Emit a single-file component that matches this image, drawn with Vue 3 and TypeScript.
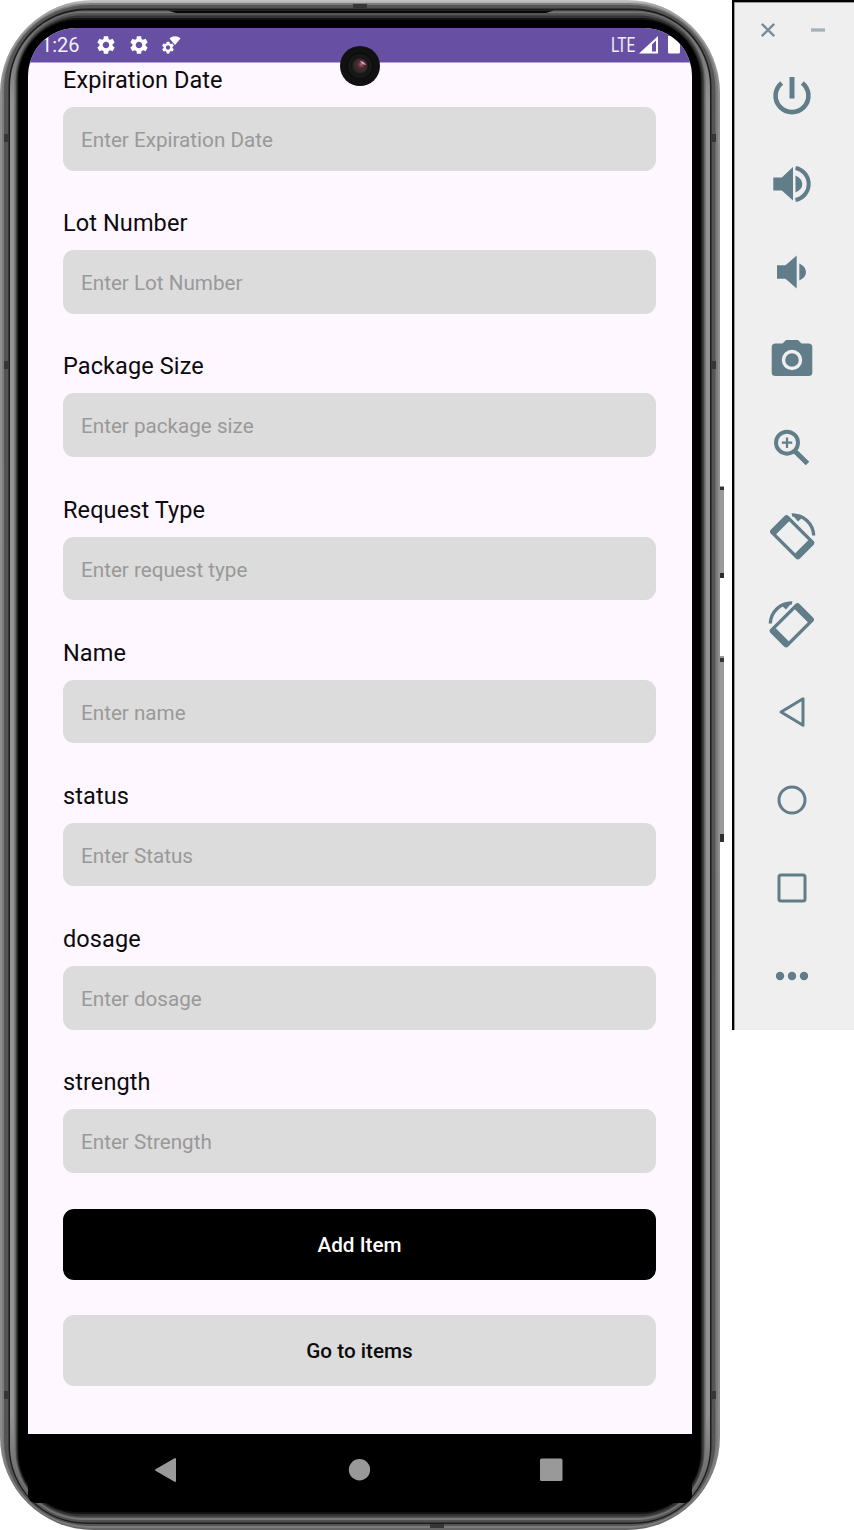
<script setup lang="ts">
interface Field {
  label: string
  hint: string
}

const fields: Field[] = [
  { label: 'Expiration Date', hint: 'Enter Expiration Date' },
  { label: 'Lot Number', hint: 'Enter Lot Number' },
  { label: 'Package Size', hint: 'Enter package size' },
  { label: 'Request Type', hint: 'Enter request type' },
  { label: 'Name', hint: 'Enter name' },
  { label: 'status', hint: 'Enter Status' },
  { label: 'dosage', hint: 'Enter dosage' },
  { label: 'strength', hint: 'Enter Strength' },
]

const gear =
  'M19.14 12.94c.04-.3.06-.61.06-.94 0-.32-.02-.64-.07-.94l2.03-1.58c.18-.14.23-.41.12-.61l-1.92-3.32c-.12-.22-.37-.29-.59-.22l-2.39.96c-.5-.38-1.03-.7-1.62-.94l-.36-2.54c-.04-.24-.24-.41-.48-.41h-3.84c-.24 0-.43.17-.47.41l-.36 2.54c-.59.24-1.13.57-1.62.94l-2.39-.96c-.22-.08-.47 0-.59.22L2.74 8.87c-.12.21-.08.47.12.61l2.03 1.58c-.05.3-.09.63-.09.94s.02.64.07.94l-2.03 1.58c-.18.14-.23.41-.12.61l1.92 3.32c.12.22.37.29.59.22l2.39-.96c.5.38 1.03.7 1.62.94l.36 2.54c.05.24.24.41.48.41h3.84c.24 0 .44-.17.47-.41l.36-2.54c.59-.24 1.13-.56 1.62-.94l2.39.96c.22.08.47 0 .59-.22l1.92-3.32c.12-.22.07-.47-.12-.61l-2.01-1.58zM12 15.6c-1.98 0-3.6-1.62-3.6-3.6s1.62-3.6 3.6-3.6 3.6 1.62 3.6 3.6-1.62 3.6-3.6 3.6z'
</script>

<template>
  <div class="stage">
    <div class="phone">
      <svg class="frame" width="726" height="1530" viewBox="0 0 726 1530">
        <defs>
          <linearGradient id="rim" x1="0" y1="0" x2="0" y2="1">
            <stop offset="0" stop-color="#c6c6c6" />
            <stop offset="0.003" stop-color="#a4a4a4" />
            <stop offset="0.06" stop-color="#929292" />
            <stop offset="0.94" stop-color="#8c8c8c" />
            <stop offset="1" stop-color="#666" />
          </linearGradient>
          <linearGradient id="lip" x1="0" y1="0" x2="0" y2="1">
            <stop offset="0" stop-color="#686868" />
            <stop offset="0.06" stop-color="#929292" />
            <stop offset="0.93" stop-color="#929292" />
            <stop offset="1" stop-color="#505050" />
          </linearGradient>
          <radialGradient id="lens" cx="0.58" cy="0.4" r="0.6">
            <stop offset="0" stop-color="#a05f80" />
            <stop offset="0.4" stop-color="#4b2838" />
            <stop offset="0.75" stop-color="#3a2a20" />
            <stop offset="1" stop-color="#242424" />
          </radialGradient>
        </defs>
        <rect x="719" y="486" width="5" height="92" fill="#9a9a9a" />
        <rect x="719" y="487" width="5" height="3" fill="#333" />
        <rect x="719" y="573" width="5" height="5" fill="#2b2b2b" />
        <rect x="719" y="656" width="5" height="186" fill="#9a9a9a" />
        <rect x="719" y="658" width="5" height="4" fill="#333" />
        <rect x="719" y="834" width="5" height="8" fill="#2f2f2f" />
        <rect x="0" y="0" width="720" height="1530" rx="93" fill="url(#rim)" />
        <rect x="2" y="3" width="716" height="1525" rx="89" fill="#7c7c7c" />
        <rect x="4" y="5" width="711.5" height="1521" rx="85" fill="#555" />
        <rect x="8.5" y="8.5" width="703" height="1515.500" rx="78" fill="#1d1d1d" />
        <rect x="10" y="10.500" width="700" height="1512" rx="76" fill="url(#lip)" />
        <rect x="14" y="12" width="692" height="1508" rx="70" fill="#777" />
        <rect x="15.500" y="13" width="689" height="1505" rx="67" fill="#555" />
        <rect x="16.500" y="15.500" width="687" height="1501" rx="65" fill="#333" />
        <rect x="17.500" y="18" width="684" height="1496" rx="62" fill="#111" />
        <rect x="18.500" y="20" width="682" height="1492" rx="60" fill="#000" />
        <path d="M168 10.500h386l-8 2.500H176z" fill="#080808" />
        <g fill="#363636">
          <rect x="4" y="134" width="5" height="8" />
          <rect x="4" y="361" width="5" height="8" />
          <rect x="4" y="1391" width="5" height="8" />
          <rect x="711" y="134" width="5" height="8" />
          <rect x="711" y="361" width="5" height="8" />
          <rect x="711" y="1391" width="5" height="8" />
          <rect x="353" y="4" width="14" height="5" />
          <rect x="430" y="1524" width="14" height="4" />
        </g>
      </svg>

      <div class="screen">
        <header class="status">
          <span class="clock">1:26</span>
          <svg class="gear" width="22" height="22" viewBox="0 0 24 24"><path :d="gear" /></svg>
          <svg class="gear" width="22" height="22" viewBox="0 0 24 24"><path :d="gear" /></svg>
          <svg class="link" width="22" height="22" viewBox="0 0 22 22">
            <path transform="translate(0.7 6.200) scale(0.61)" :d="gear" />
            <path d="M9.500 4.500C12.500 1.500 17.500 1.500 20.500 4.500L15 11z" />
          </svg>
          <span class="lte">LTE</span>
          <svg class="signal" width="20" height="18" viewBox="0 0 20 18">
            <path fill-rule="evenodd" d="M0 17.500L19 0V17.500zM13 8.500V15.500H17V4.500z" />
          </svg>
          <svg class="battery" width="13" height="18" viewBox="0 0 13 18">
            <path d="M0 0H12V16q0 1.500-1.500 1.500h-9Q0 17.500 0 16z" />
          </svg>
        </header>

        <main class="form">
          <div v-for="field in fields" :key="field.label" class="field">
            <label class="label">{{ field.label }}</label>
            <div class="input">{{ field.hint }}</div>
          </div>
          <button class="btn primary">Add Item</button>
          <button class="btn plain">Go to items</button>
        </main>
      </div>

      <nav class="nav">
        <svg width="22" height="26" viewBox="0 0 22 26"><path d="M1 13L20 2V24Z" stroke-width="2" /></svg>
        <svg width="24" height="26" viewBox="0 0 24 26"><circle cx="13.500" cy="12.700" r="10.700" stroke="none" /></svg>
        <svg width="23" height="26" viewBox="0 0 23 26"><rect x="0" y="1.500" width="22.500" height="22.500" rx="1.500" stroke="none" /></svg>
      </nav>

      <svg class="camera" width="40" height="40" viewBox="0 0 40 40">
        <circle cx="20" cy="20" r="20" fill="#111" />
        <circle cx="20" cy="20" r="13" fill="#171717" stroke="#080808" />
        <circle cx="20" cy="20" r="7.500" fill="url(#lens)" />
        <path d="M20 15q4 0 6 4l-4-1z" fill="#d59ab9" />
      </svg>
    </div>

    <aside class="tools">
      <div class="window">
        <svg width="16" height="16" viewBox="0 0 16 16"><path d="M1.800 1.800L14.200 14.200M14.200 1.800L1.800 14.200" stroke="#78909c" stroke-width="2.500" /></svg>
        <svg width="16" height="16" viewBox="0 0 16 16"><path d="M1 8H15" stroke="#a2b3bb" stroke-width="3.300" /></svg>
      </div>
      <!-- Power -->
      <div class="tool">
        <svg viewBox="0 0 48 48">
          <path class="line" stroke-width="4.600" d="M13.700 11A16.400 16.400 0 1 0 34.300 11" />
          <path class="line" stroke-width="5" d="M24 5V26.500" />
        </svg>
      </div>
      <!-- Volume up -->
      <div class="tool">
        <svg viewBox="0 0 48 48">
          <path d="M5.300 17.500H13.800L25 7V40.500L13.800 30.500H5.300zM27.500 15.500Q34.300 18.500 34.300 24T27.500 32.500z" />
          <path class="line" stroke-width="4" d="M27.500 8A16.300 16.300 0 0 1 27.500 40" />
        </svg>
      </div>
      <!-- Volume down -->
      <div class="tool">
        <svg viewBox="0 0 48 48">
          <path d="M9 17.300H17.500L28.700 7.500V40.500L17.500 30.700H9zM31.300 15.500Q38 18.500 38 24T31.300 32.500z" />
        </svg>
      </div>
      <!-- Screenshot -->
      <div class="tool">
        <svg viewBox="0 0 48 48">
          <path d="M7.500 7.500H14.500L18 4H30L33.500 7.500H40.500Q44.300 7.500 44.300 11V36.500Q44.300 40 40.500 40H7.500Q3.700 40 3.700 36.500V11Q3.700 7.500 7.500 7.500z" />
          <circle cx="24" cy="24" r="8.500" fill="none" stroke="#efefef" stroke-width="3.400" />
        </svg>
      </div>
      <!-- Zoom -->
      <div class="tool">
        <svg viewBox="0 0 48 48">
          <circle class="line" cx="19" cy="18.700" r="11" stroke-width="3.900" />
          <path class="line" stroke-width="2.200" d="M19 13.500V24M13.800 18.700H24.200" />
          <path class="line" stroke-width="5" d="M27 27.200L39.500 39.500" />
        </svg>
      </div>
      <!-- Rotate left / right -->
      <div v-for="side in ['left', 'right']" :key="side" class="tool">
        <svg viewBox="0 0 48 48" :class="{ mirrored: side === 'right' }">
          <path
            fill-rule="evenodd"
            transform="translate(24.200 25.200) rotate(45)"
            d="M-17.500-12.500H17.500Q20.500-12.500 20.500-9.500V9.500Q20.500 12.500 17.500 12.500H-17.500Q-20.500 12.500-20.500 9.500V-9.500Q-20.500-12.500-17.500-12.500zM-13.500-9.200V9.200H13.500V-9.200z"
          />
          <path class="line" stroke-width="3.300" d="M24 2.800A21.500 21.500 0 0 1 45.700 23.500" />
          <path d="M23 1.500L35 5L30 9.500z" />
        </svg>
      </div>
      <!-- Back -->
      <div class="tool">
        <svg viewBox="0 0 48 48"><path class="line" stroke-width="3" stroke-linejoin="round" d="M13 24L35 10.800V37.200Z" /></svg>
      </div>
      <!-- Home -->
      <div class="tool">
        <svg viewBox="0 0 48 48"><circle class="line" cx="24" cy="24" r="13" stroke-width="3" /></svg>
      </div>
      <!-- Overview -->
      <div class="tool">
        <svg viewBox="0 0 48 48"><rect class="line" x="11" y="11" width="26" height="26" rx="2" stroke-width="3" /></svg>
      </div>
      <!-- More -->
      <div class="tool">
        <svg viewBox="0 0 48 48">
          <circle cx="12" cy="24" r="4.200" />
          <circle cx="24" cy="24" r="4.200" />
          <circle cx="36" cy="24" r="4.200" />
        </svg>
      </div>
    </aside>
  </div>
</template>

<style>
body {
  background: #fff;
}
</style>

<style scoped>
.stage {
  display: flex;
  align-items: flex-start;
  justify-content: space-between;
  width: 854px;
  height: 1530px;
  overflow: hidden;
  font-family: Roboto, "Liberation Sans", sans-serif;
}

.stage * {
  box-sizing: border-box;
}

.stage svg {
  display: block;
  flex: none;
}

.phone {
  position: relative;
  width: 720px;
  height: 1530px;
  padding: 28px 28px 0;
}

.frame {
  position: absolute;
  top: 0;
  left: 0;
}

.screen {
  position: relative;
  height: 1406px;
  overflow: hidden;
  border-radius: 48px 48px 0 0;
  background: #fef7ff;
}

.status {
  display: flex;
  align-items: center;
  height: 35px;
  padding-left: 13px;
  border-bottom: 1px solid #b3a3d6;
  background: #6750a3;
  color: #f4effb;
  font-size: 20px;
}

.status svg {
  fill: #fff;
}

.clock {
  width: 39px;
  line-height: 36px;
}

.gear {
  margin: 0 10.500px 0 15px;
}

.gear + .gear {
  margin-left: 0;
}

.lte {
  width: 28px;
  margin-left: auto;
  transform: scaleX(0.77);
  transform-origin: left;
}

.signal {
  margin-right: 9px;
}

.battery {
  margin-right: 11px;
}

.form {
  display: flex;
  flex-direction: column;
  padding: 0 36px 0 35px;
}

.field {
  margin-bottom: 35.700px;
}

.label {
  display: block;
  height: 44px;
  color: #0c0a0d;
  font-size: 23.500px;
  line-height: 34.600px;
  letter-spacing: 0.100px;
}

.input {
  height: 63.500px;
  padding-left: 18px;
  border-radius: 11px;
  background: #dcdcdc;
  color: #999;
  font-size: 20.650px;
  line-height: 66px;
}

.btn {
  height: 70.500px;
  padding: 1px 0 0;
  border: 0;
  border-radius: 11px;
  font: 500 20.700px Roboto, "Liberation Sans", sans-serif;
}

.primary {
  margin-top: 0.800px;
  background: #000;
  color: #fff;
}

.plain {
  margin-top: 35.500px;
  background: #dcdcdc;
  color: #0b0b0b;
}

.nav {
  position: relative;
  display: flex;
  align-items: flex-start;
  justify-content: space-between;
  height: 69px;
  padding: 22.500px 129px 0 126.500px;
  border-radius: 0 0 8px 8px;
  background: #000;
}

.nav svg {
  fill: #999;
  stroke: #999;
  stroke-linejoin: round;
}

.camera {
  position: absolute;
  top: 46px;
  left: 340px;
}

.tools {
  width: 122px;
  height: 1030px;
  border-top: 2px solid #000;
  border-left: 2px solid #000;
  background: #efefef;
  box-shadow: inset 1px 1px #999;
}

.window {
  display: flex;
  gap: 34px;
  height: 50px;
  padding: 20px 0 0 26px;
}

.tool {
  display: flex;
  align-items: center;
  height: 88px;
  padding-left: 34px;
}

.tool svg {
  width: 48px;
  height: 48px;
  fill: #617d8a;
  overflow: visible;
}

.tool .line {
  fill: none;
  stroke: #617d8a;
}

.mirrored {
  transform: scaleX(-1);
}
</style>
